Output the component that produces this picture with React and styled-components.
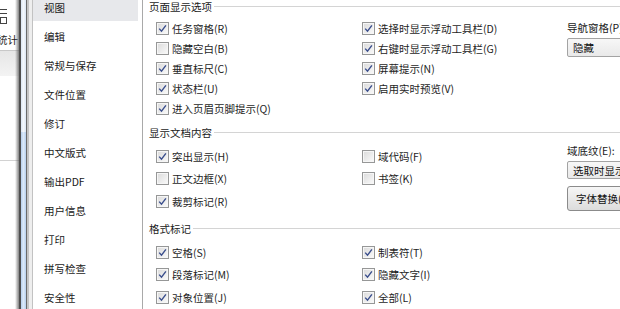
import styled, { createGlobalStyle } from "styled-components";

const GlobalStyle = createGlobalStyle`
  html, body {
    margin: 0;
    padding: 0;
    background: #fff;
  }
  body {
    font-family: "Noto Sans CJK SC", "Noto Sans", sans-serif;
    font-size: 10.5px;
    color: #1e1e1e;
  }
`;

const Screen = styled.div`
  display: flex;
  width: 620px;
  height: 309px;
  overflow: hidden;
  background: #fff;
`;

/* part of the Word window behind the dialog */
const BackWindow = styled.div`
  width: 19px;
  flex-shrink: 0;
  display: flex;
  flex-direction: column;
  overflow: hidden;
  background: #fff;
  position: relative;

  &::after {
    content: "";
    position: absolute;
    top: 0;
    bottom: 0;
    right: 0;
    width: 4px;
    background: linear-gradient(to right, rgba(120, 120, 120, 0), rgba(90, 90, 90, 0.75));
  }
`;

const BackIcon = styled.div`
  height: 32px;
  display: flex;
  align-items: flex-start;
  padding-top: 8px;
  box-sizing: border-box;
`;

const BackLabel = styled.div`
  line-height: 16px;
  height: 16px;
  margin-left: -3px;
  white-space: nowrap;
  color: #222;
`;

const BackBand = styled.div`
  margin-top: 2px;
  height: 25px;
  border-top: 1px solid #c8c8c8;
  background: linear-gradient(#e6e6e6, #f3f3f3);
`;

const BackRule = styled.div`
  margin-top: 84px;
  border-top: 1px solid #d2d2d2;
`;

const Frame = styled.div`
  width: 14px;
  flex-shrink: 0;
  display: flex;
  flex-direction: column;
`;

const FramePart = styled.div`
  height: ${(p) => p.$height || "auto"};
  flex: ${(p) => (p.$height ? "none" : "1")};
  background: linear-gradient(
    to right,
    #4f4f4f 0px,
    #4f4f4f 2px,
    ${(p) => p.$blue} 2px,
    ${(p) => p.$mid} 4.5px,
    ${(p) => p.$blue} 7px,
    #6a6a6a 7px,
    #6a6a6a 8px,
    #c4c4c4 8px,
    #c4c4c4 10px,
    #eeeeee 10px,
    #eeeeee 13px,
    #c2c2c2 13px
  );
`;

const Sidebar = styled.div`
  width: 109px;
  flex-shrink: 0;
  overflow: hidden;
  background: #fff;
`;

const NavList = styled.div`
  margin-top: -6.5px;
`;

const NavItem = styled.div`
  height: 27px;
  line-height: 27px;
  margin-bottom: 2.1px;
  margin-right: 4px;
  padding-left: 11px;
  white-space: nowrap;
  color: #1a1a1a;
  background: ${(p) => (p.$active ? "#e7e8eb" : "transparent")};
`;

const Content = styled.div`
  flex: 1;
  border-left: 1px solid #a9a9a9;
  padding-left: 6px;
  min-width: 0;
`;

const GroupHeader = styled.div`
  display: flex;
  align-items: center;
  gap: 2px;
  height: 14px;
  line-height: 14px;
  margin-top: ${(p) => p.$top}px;
  white-space: nowrap;
  color: #1a1a1a;
`;

const HeaderLine = styled.div`
  flex: 1;
  height: 1px;
  margin-top: -2px;
  background: #d4d4d4;
`;

const GroupBody = styled.div`
  display: flex;
  padding-left: 7px;
  margin-top: ${(p) => p.$top}px;
`;

const CheckGrid = styled.div`
  display: grid;
  grid-template-columns: 206px 205px;
  grid-auto-rows: ${(p) => p.$row}px;
  flex-shrink: 0;
`;

const CheckRow = styled.label`
  display: flex;
  align-items: center;
  gap: 3px;
  white-space: nowrap;
  grid-column: ${(p) => p.$col};
`;

const Box = styled.span`
  width: 13px;
  height: 13px;
  box-sizing: border-box;
  border: 1px solid #969797;
  box-shadow: inset 0 0 0 1px #f6f6f6;
  background: linear-gradient(135deg, #dadada, #fbfbfb);
  display: flex;
  align-items: center;
  justify-content: center;
  flex-shrink: 0;
`;

const SideColumn = styled.div`
  display: flex;
  flex-direction: column;
  margin-top: ${(p) => p.$top}px;
  white-space: nowrap;
`;

const SideLabel = styled.div`
  line-height: ${(p) => p.$line}px;
  color: #1a1a1a;
`;

const Select = styled.div`
  width: 110px;
  height: ${(p) => p.$height}px;
  margin-top: ${(p) => p.$top}px;
  box-sizing: border-box;
  border: 1px solid #a3a3a3;
  border-radius: 2px;
  background: linear-gradient(#f7f7f7, #e9e9e9);
  padding-left: 5px;
  display: flex;
  align-items: center;
  color: #111;
`;

const Button = styled.div`
  width: 100px;
  height: 25px;
  margin-top: 7px;
  box-sizing: border-box;
  border: 1px solid #8b8b8b;
  border-radius: 3px;
  background: linear-gradient(#f6f6f6, #dcdcdc);
  padding-left: 8px;
  display: flex;
  align-items: center;
  color: #111;
`;

const CheckBox = ({ checked }) => (
  <Box>
    {checked && (
      <svg width="9" height="9" viewBox="0 0 9 9">
        <path
          d="M1.2 4.6 L3.5 7.2 L7.9 1.4"
          fill="none"
          stroke="#3a4e8c"
          strokeWidth="1.4"
        />
      </svg>
    )}
  </Box>
);

const Check = ({ col, checked, label }) => (
  <CheckRow $col={col}>
    <CheckBox checked={checked} />
    <span>{label}</span>
  </CheckRow>
);

const navItems = [
  "视图",
  "编辑",
  "常规与保存",
  "文件位置",
  "修订",
  "中文版式",
  "输出PDF",
  "用户信息",
  "打印",
  "拼写检查",
  "安全性",
];

const pageOptions = [
  { col: 1, checked: true, label: "任务窗格(R)" },
  { col: 2, checked: true, label: "选择时显示浮动工具栏(D)" },
  { col: 1, checked: false, label: "隐藏空白(B)" },
  { col: 2, checked: true, label: "右键时显示浮动工具栏(G)" },
  { col: 1, checked: true, label: "垂直标尺(C)" },
  { col: 2, checked: true, label: "屏幕提示(N)" },
  { col: 1, checked: true, label: "状态栏(U)" },
  { col: 2, checked: true, label: "启用实时预览(V)" },
  { col: 1, checked: true, label: "进入页眉页脚提示(Q)" },
];

const docOptions = [
  { col: 1, checked: true, label: "突出显示(H)" },
  { col: 2, checked: false, label: "域代码(F)" },
  { col: 1, checked: false, label: "正文边框(X)" },
  { col: 2, checked: false, label: "书签(K)" },
  { col: 1, checked: true, label: "裁剪标记(R)" },
];

const markOptions = [
  { col: 1, checked: true, label: "空格(S)" },
  { col: 2, checked: true, label: "制表符(T)" },
  { col: 1, checked: true, label: "段落标记(M)" },
  { col: 2, checked: true, label: "隐藏文字(I)" },
  { col: 1, checked: true, label: "对象位置(J)" },
  { col: 2, checked: true, label: "全部(L)" },
];

const App = () => {
  return (
    <>
      <GlobalStyle />
      <Screen>
        <BackWindow>
          <BackIcon>
            <svg width="15" height="18" viewBox="0 0 15 18">
              <path d="M0 1.5 H7 M0 5.5 H7" stroke="#444" strokeWidth="1" />
              <rect x="0.5" y="9.5" width="6" height="6" fill="none" stroke="#444" />
            </svg>
          </BackIcon>
          <BackLabel>统计</BackLabel>
          <BackBand />
          <BackRule />
        </BackWindow>

        <Frame>
          <FramePart $height="132px" $blue="#dbe6f3" $mid="#f4f8fc" />
          <FramePart $blue="#b7d0ee" $mid="#dce9f8" />
        </Frame>

        <Sidebar>
          <NavList>
            {navItems.map((item, i) => (
              <NavItem key={item} $active={i === 0}>
                {item}
              </NavItem>
            ))}
          </NavList>
        </Sidebar>

        <Content>
          <GroupHeader $top={0}>
            页面显示选项
            <HeaderLine />
          </GroupHeader>
          <GroupBody $top={4}>
            <CheckGrid $row={20}>
              {pageOptions.map((o) => (
                <Check key={o.label} {...o} />
              ))}
            </CheckGrid>
            <SideColumn $top={0}>
              <SideLabel $line={20}>导航窗格(P):</SideLabel>
              <Select $height={19} $top={0}>
                隐藏
              </Select>
            </SideColumn>
          </GroupBody>

          <GroupHeader $top={8}>
            显示文档内容
            <HeaderLine />
          </GroupHeader>
          <GroupBody $top={5}>
            <CheckGrid $row={22.5}>
              {docOptions.map((o) => (
                <Check key={o.label} {...o} />
              ))}
            </CheckGrid>
            <SideColumn $top={-2}>
              <SideLabel $line={16}>域底纹(E):</SideLabel>
              <Select $height={18} $top={2}>
                选取时显示
              </Select>
              <Button>字体替换(O)...</Button>
            </SideColumn>
          </GroupBody>

          <GroupHeader $top={9.5}>
            格式标记
            <HeaderLine />
          </GroupHeader>
          <GroupBody $top={5}>
            <CheckGrid $row={22.5}>
              {markOptions.map((o) => (
                <Check key={o.label} {...o} />
              ))}
            </CheckGrid>
          </GroupBody>
        </Content>
      </Screen>
    </>
  );
};

export default App;
